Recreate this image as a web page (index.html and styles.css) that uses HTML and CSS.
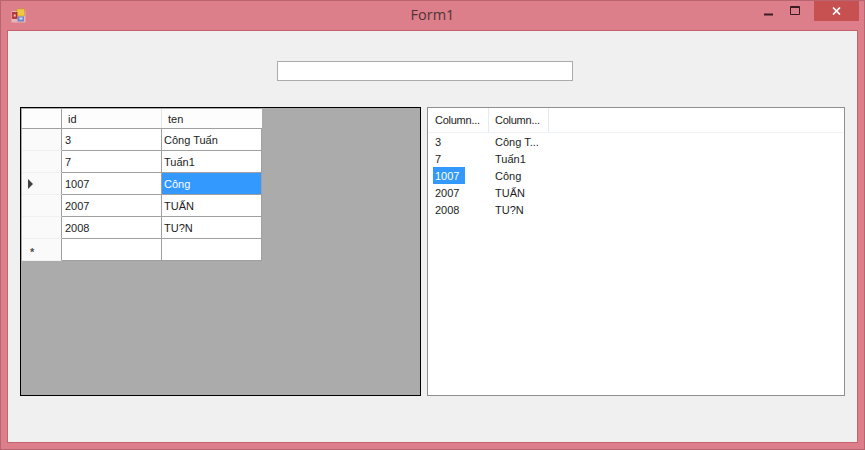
FILE: index.html
```html
<!DOCTYPE html>
<html lang="vi">
<head>
<meta charset="utf-8">
<title>Form1</title>
<link rel="stylesheet" href="styles.css">
</head>
<body>
<div class="window">
  <header class="titlebar">
    <svg class="app-icon" width="15" height="15" viewBox="0 0 15 15" aria-hidden="true">
      <rect x="0.5" y="3" width="14" height="11.5" fill="#e9b4ba"/>
      <rect x="6" y="1" width="7.5" height="7" fill="#f1c844" stroke="#c79a2a" stroke-width="0.6"/>
      <rect x="1.5" y="4.5" width="4.5" height="6" fill="#c93636" stroke="#8a2020" stroke-width="0.6"/>
      <rect x="2.8" y="6.5" width="1.8" height="2" fill="#f0d0d0"/>
      <rect x="6.5" y="8.5" width="6.5" height="5" fill="#6f86c9"/>
      <rect x="8.5" y="9.5" width="3" height="2" fill="#d5dcf0"/>
    </svg>
    <h1 class="title">Form1</h1>
    <div class="controls">
      <span class="ctl ctl-min"><svg width="9" height="3" viewBox="0 0 9 3" aria-hidden="true"><rect width="9" height="2" y="0.5" fill="#3a1d24"/></svg></span>
      <span class="ctl ctl-max"><svg width="10" height="9" viewBox="0 0 10 9" aria-hidden="true"><path d="M0.5 0.5h9v8h-9z M0.5 1.5h9" fill="none" stroke="#3a1d24"/></svg></span>
      <span class="ctl ctl-close"><svg width="9" height="8" viewBox="0 0 9 8" aria-hidden="true"><path d="M1 0.5L8 7.5M8 0.5L1 7.5" fill="none" stroke="#fff" stroke-width="1.7"/></svg></span>
    </div>
  </header>
  <main class="client">
    <div class="search-row"><input class="textbox" type="text" aria-label="Tìm kiếm"></div>
    <div class="panes">
      <section class="datagrid">
        <div class="grid-row head">
          <div class="rowhead"></div><div class="cell">id</div><div class="cell">ten</div>
        </div>
        <div class="grid-row">
          <div class="rowhead"></div><div class="cell">3</div><div class="cell">Công Tuấn</div>
        </div>
        <div class="grid-row">
          <div class="rowhead"></div><div class="cell">7</div><div class="cell">Tuấn1</div>
        </div>
        <div class="grid-row">
          <div class="rowhead"><span class="arrow"></span></div><div class="cell">1007</div><div class="cell selected">Công</div>
        </div>
        <div class="grid-row">
          <div class="rowhead"></div><div class="cell">2007</div><div class="cell">TUẤN</div>
        </div>
        <div class="grid-row">
          <div class="rowhead"></div><div class="cell">2008</div><div class="cell">TU?N</div>
        </div>
        <div class="grid-row">
          <div class="rowhead"><span class="star">*</span></div><div class="cell"></div><div class="cell"></div>
        </div>
      </section>
      <section class="listview">
        <div class="lv-head">
          <div class="lv-col">Column...</div>
          <div class="lv-col">Column...</div>
        </div>
        <div class="lv-body">
          <div class="lv-row"><span class="lv-a">3</span><span class="lv-b">Công T...</span></div>
          <div class="lv-row"><span class="lv-a">7</span><span class="lv-b">Tuấn1</span></div>
          <div class="lv-row"><span class="lv-a lv-sel">1007</span><span class="lv-b">Công</span></div>
          <div class="lv-row"><span class="lv-a">2007</span><span class="lv-b">TUẤN</span></div>
          <div class="lv-row"><span class="lv-a">2008</span><span class="lv-b">TU?N</span></div>
        </div>
      </section>
    </div>
  </main>
</div>
</body>
</html>
```

FILE: styles.css
```css
* { box-sizing: border-box; }
html, body { margin: 0; padding: 0; }
body {
  width: 865px;
  height: 450px;
  overflow: hidden;
  font: 11px "Liberation Sans", Arial, sans-serif;
  color: #1c1c1c;
}
.window {
  width: 865px;
  height: 450px;
  display: flex;
  flex-direction: column;
  background: #dd7f8b;
  border: 1px solid #b9656f;
  padding: 0 6px 6px;
}
.titlebar {
  height: 29px;
  flex: none;
  display: flex;
  align-items: center;
  position: relative;
  margin: 0 -6px;
  padding-left: 10px;
}
.app-icon { flex: none; }
.title {
  position: absolute;
  left: 0;
  right: 0;
  top: 4px;
  margin: 0;
  text-align: center;
  font: 400 14.5px/20px "Open Sans", sans-serif;
  color: #503237;
}
.controls {
  margin-left: auto;
  margin-right: 5px;
  align-self: flex-start;
  display: flex;
  position: relative;
}
.ctl {
  height: 20px;
  display: flex;
  align-items: center;
  justify-content: center;
}
.ctl-min { width: 26px; padding-top: 6px; }
.ctl-max { width: 27px; padding-bottom: 1px; margin-right: 6px; }
.ctl-close { width: 45px; background: #c75050; }
.client {
  flex: 1;
  background: #f0f0f0;
  border: 1px solid #c4626e;
  padding: 30px 12px 0;
  display: flex;
  flex-direction: column;
}
.search-row {
  display: flex;
  padding-left: 257px;
  margin-bottom: 26px;
}
.textbox {
  width: 296px;
  height: 20px;
  margin: 0;
  padding: 0;
  background: #fff;
  border: 1px solid #ababab;
  border-radius: 0;
  outline: none;
}
.panes {
  display: flex;
  gap: 6px;
  height: 289px;
}
.datagrid {
  width: 401px;
  background: #ababab;
  border: 1px solid #000;
  padding-left: 1px;
  padding-top: 1px;
}
.grid-row {
  display: grid;
  grid-template-columns: 40px 100px 100px;
  grid-template-rows: 100%;
  height: 22px;
  width: 240px;
}
.grid-row.head {
  height: 20px;
  background: #fff;
  border-bottom: 1px solid #a0a0a0;
}
.rowhead {
  background: #fafafa;
  border-right: 1px solid #a0a0a0;
  border-bottom: 1px solid #f0f0f0;
  display: flex;
  align-items: center;
  padding-left: 6px;
}
.cell {
  background: #fff;
  border-right: 1px solid #a0a0a0;
  border-bottom: 1px solid #a0a0a0;
  padding: 0 0 0 2px;
  line-height: 22px;
  white-space: nowrap;
}
.cell:nth-child(2) { padding-left: 3px; }
.head .rowhead, .head .cell { border-bottom: 0; background: #fdfdfd; }
.head .cell, .head .cell:nth-child(2) { padding-left: 6px; line-height: 20px; border-right: 1px solid #e4e4e4; }
.head .cell:last-child { border-right: 0; }
.cell.selected { background: #3399ff; color: #fff; }
.arrow {
  width: 0;
  height: 0;
  border-left: 5px solid #404040;
  border-top: 5px solid transparent;
  border-bottom: 5px solid transparent;
}
.star { font-size: 11px; line-height: 11px; padding: 6px 0 0 2px; color: #505050; font-weight: 700; }
.listview {
  width: 418px;
  background: #fff;
  border: 1px solid #8f8f8f;
}
.lv-head {
  height: 25px;
  display: flex;
  border-bottom: 1px solid #eef1f5;
}
.lv-col {
  width: 60px;
  padding-left: 6px;
  line-height: 24px;
  letter-spacing: -0.25px;
  border-right: 1px solid #e6e9ee;
  white-space: nowrap;
}
.lv-col:first-child { width: 61px; padding-left: 7px; }
.lv-row {
  display: flex;
  height: 17px;
  line-height: 19px;
  padding-left: 5px;
}
.lv-a { width: 32px; padding-left: 2px; margin-right: 30px; }
.lv-b { white-space: nowrap; }
.lv-sel { background: #3399ff; color: #fff; }
```
